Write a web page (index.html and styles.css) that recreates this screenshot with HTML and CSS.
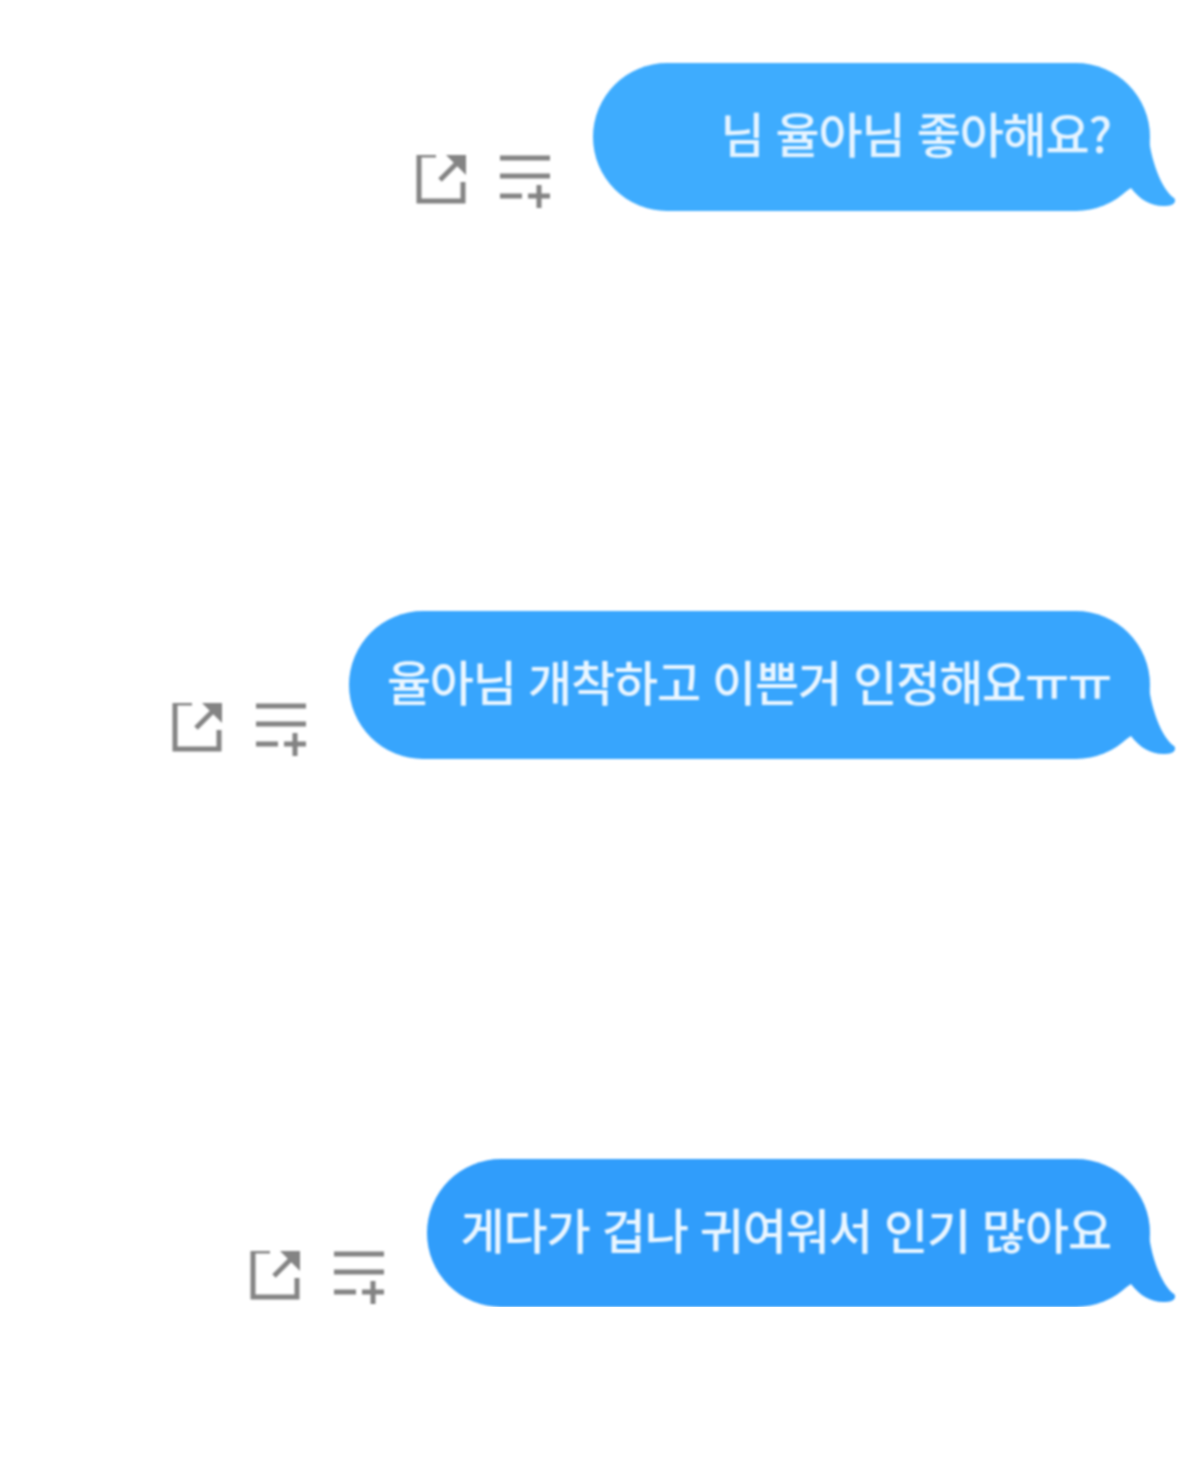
FILE: index.html
```html
<!DOCTYPE html>
<html lang="ko">
<head>
  <meta charset="UTF-8" />
  <meta name="viewport" content="width=device-width, initial-scale=1.0"/>
  <title>Chat</title>
  <link rel="stylesheet" href="styles.css">
</head>
<body>

  <svg class="defs" width="0" height="0" aria-hidden="true">
    <symbol id="share" viewBox="0 3 50 53">
      <path d="M20 3H3V49H47V30" fill="none" stroke="currentColor" stroke-width="5"/>
      <path d="M24 28L45 7" fill="none" stroke="currentColor" stroke-width="5"/>
      <path d="M29 2H50V23Z" fill="currentColor"/>
    </symbol>
    <symbol id="addlist" viewBox="0 0 50 53">
      <path d="M0 3H50M0 21H50M0 41H22M28 41H50M39 30V53" fill="none" stroke="currentColor" stroke-width="5"/>
    </symbol>
    <symbol id="tail" viewBox="0 0 50 81">
      <path d="M0 0H23C25 30 37 60 49 68C52 71 49 76 41 76C27 77 15 70 6 58L0 62Z" fill="currentColor"/>
    </symbol>
  </svg>

  <main class="chat">
    <div class="row">
      <div class="actions">
        <svg class="icon"><use href="#share"/></svg>
        <svg class="icon"><use href="#addlist"/></svg>
      </div>
      <div class="bubble bubble-a">
        <span>님 율아님 좋아해요?</span>
        <svg class="tail"><use href="#tail"/></svg>
      </div>
    </div>

    <div class="row">
      <div class="actions">
        <svg class="icon"><use href="#share"/></svg>
        <svg class="icon"><use href="#addlist"/></svg>
      </div>
      <div class="bubble bubble-b">
        <span>율아님 개착하고 이쁜거 인정해요ㅠㅠ</span>
        <svg class="tail"><use href="#tail"/></svg>
      </div>
    </div>

    <div class="row">
      <div class="actions">
        <svg class="icon"><use href="#share"/></svg>
        <svg class="icon"><use href="#addlist"/></svg>
      </div>
      <div class="bubble bubble-c">
        <span>게다가 겁나 귀여워서 인기 많아요</span>
        <svg class="tail"><use href="#tail"/></svg>
      </div>
    </div>
  </main>

</body>
</html>
```

FILE: styles.css
```css
body {
  margin: 0;
  background: #fff;
  font-family: "Noto Sans CJK KR", "Noto Sans", sans-serif;
}
.defs {
  position: absolute;
}
.chat {
  display: flex;
  flex-direction: column;
  gap: 400px;
  padding: 63px 50px 0 0;
  filter: blur(1.1px);
}
.row {
  display: flex;
  justify-content: flex-end;
  align-items: flex-end;
  gap: 43px;
}
.actions {
  display: flex;
  gap: 34px;
  padding-bottom: 3px;
  color: #848484;
}
.icon {
  width: 50px;
  height: 53px;
}
.bubble {
  position: relative;
  box-sizing: border-box;
  height: 148px;
  padding: 0 39px 10px 0;
  border-radius: 74px;
  display: flex;
  align-items: center;
  justify-content: flex-end;
  color: #eaf6ff;
  font-size: 48px;
  font-weight: 500;
  letter-spacing: -1.2px;
  white-space: nowrap;
}
.tail {
  position: absolute;
  right: -25px;
  bottom: 0;
  width: 50px;
  height: 81px;
}
.bubble-a {
  width: 557px;
  background: #3eacfe;
  color: #e6f4ff;
}
.bubble-a .tail {
  color: #3eacfe;
}
.bubble-b {
  width: 801px;
  background: #37a5fd;
}
.bubble-b .tail {
  color: #37a5fd;
}
.bubble-c {
  width: 723px;
  background: #309dfb;
}
.bubble-c .tail {
  color: #309dfb;
}
```
